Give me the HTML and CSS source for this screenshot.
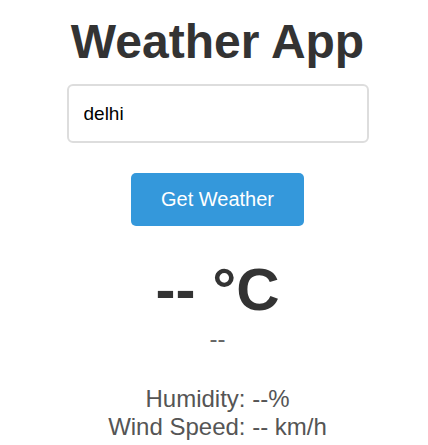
FILE: index.html
```html
<!DOCTYPE html>
<html lang="en">
<head>
<meta charset="utf-8">
<title>Weather App</title>
<link rel="stylesheet" href="styles.css">
</head>
<body>
<div class="app">
  <h1 class="title">Weather App</h1>
  <input class="city" type="text" value="delhi">
  <button class="get-btn">Get Weather</button>
  <div class="temp">-- °C</div>
  <div class="desc">--</div>
  <div class="details">
    <div class="row">Humidity: --%</div>
    <div class="row">Wind Speed: -- km/h</div>
  </div>
</div>
</body>
</html>
```

FILE: styles.css
```css
body {
  margin: 0;
  background: #ffffff;
  font-family: "Liberation Sans", Arial, sans-serif;
}
.app {
  display: flex;
  flex-direction: column;
  align-items: center;
  padding-top: 14px;
  padding-left: 7px;
}
.title {
  margin: 0;
  font-size: 48px;
  font-weight: bold;
  color: #333333;
}
.city {
  box-sizing: border-box;
  margin-top: 15px;
  width: 302px;
  height: 59px;
  padding: 0 15px;
  border: 2px solid #dddddd;
  border-radius: 6px;
  font-family: "Liberation Sans", Arial, sans-serif;
  font-size: 19px;
  color: #000000;
  outline: none;
}
.get-btn {
  margin-top: 30px;
  padding: 15px 30px;
  border: none;
  border-radius: 5px;
  background: #3498db;
  color: #ffffff;
  font-family: "Liberation Sans", Arial, sans-serif;
  font-size: 20px;
  line-height: 23px;
}
.temp {
  margin-top: 29px;
  font-size: 60px;
  font-weight: bold;
  color: #333333;
}
.desc {
  margin-top: 1px;
  font-size: 24px;
  color: #666666;
}
.details {
  margin-top: 32px;
  font-size: 24px;
  color: #555555;
  text-align: center;
}
```
